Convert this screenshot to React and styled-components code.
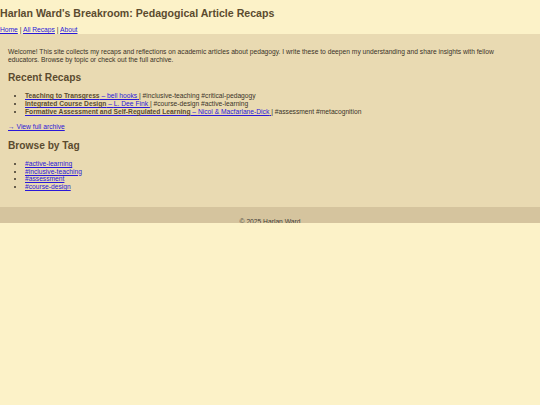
import styled, { createGlobalStyle } from "styled-components";

const GlobalStyle = createGlobalStyle`
  html, body {
    margin: 0;
    padding: 0;
    background: #fcf2c8;
    font-family: "Liberation Sans", Arial, sans-serif;
    font-size: 6.7px;
    line-height: 8px;
    color: #3a3328;
  }
  a {
    color: #2a18d8;
  }
`;

const recaps = [
  {
    title: "Teaching to Transgress",
    author: "bell hooks",
    tags: "#inclusive-teaching #critical-pedagogy",
  },
  {
    title: "Integrated Course Design",
    author: "L. Dee Fink",
    tags: "#course-design #active-learning",
  },
  {
    title: "Formative Assessment and Self-Regulated Learning",
    author: "Nicol & Macfarlane-Dick",
    tags: "#assessment #metacognition",
  },
];

const tags = ["#active-learning", "#inclusive-teaching", "#assessment", "#course-design"];

export default function App() {
  return (
    <>
      <GlobalStyle />
      <Header>
        <Title>Harlan Ward's Breakroom: Pedagogical Article Recaps</Title>
        <Nav>
          <a href="#">Home</a> | <a href="#">All Recaps</a> | <a href="#">About</a>
        </Nav>
      </Header>
      <Main>
        <Intro>
          Welcome! This site collects my recaps and reflections on academic articles about
          pedagogy. I write these to deepen my understanding and share insights with fellow
          educators. Browse by topic or check out the full archive.
        </Intro>
        <SectionTitle>Recent Recaps</SectionTitle>
        <List>
          {recaps.map((r) => (
            <li key={r.title}>
              <a href="#">
                <RecapTitle>{r.title}</RecapTitle> – {r.author}{" "}
              </a>{" "}
              | {r.tags}
            </li>
          ))}
        </List>
        <ArchiveLink href="#">→ View full archive</ArchiveLink>
        <SectionTitle>Browse by Tag</SectionTitle>
        <List $last>
          {tags.map((t) => (
            <li key={t}>
              <a href="#">{t}</a>
            </li>
          ))}
        </List>
      </Main>
      <Footer>© 2025 Harlan Ward</Footer>
    </>
  );
}

const Header = styled.header`
  padding: 7px 0 0;
`;

const Title = styled.h1`
  margin: 0 0 6px;
  font-size: 10.6px;
  line-height: 13px;
  font-weight: bold;
  color: #5b4b2f;
`;

const Nav = styled.nav`
  height: 8px;
`;

const Main = styled.main`
  background: #e9dab2;
  padding: 8px 8px 8px;
`;

const Intro = styled.p`
  margin: 6px 0 7px;
  max-width: 505px;
`;

const SectionTitle = styled.h2`
  margin: 0 0 8px;
  font-size: 10.2px;
  line-height: 13px;
  font-weight: bold;
  color: #5b4b2f;
`;

const List = styled.ul`
  margin: 0 0 ${(p) => (p.$last ? "8px" : "7px")};
  padding-left: 17px;
  line-height: ${(p) => (p.$last ? "7.7px" : "8px")};
`;

const RecapTitle = styled.strong`
  color: #5b4b2f;
`;

const ArchiveLink = styled.a`
  display: block;
  margin-bottom: 8px;
`;

const Footer = styled.footer`
  box-sizing: border-box;
  height: 16px;
  padding-top: 11px;
  background: #d5c49e;
  text-align: center;
  color: #444038;
  line-height: 8px;
`;
